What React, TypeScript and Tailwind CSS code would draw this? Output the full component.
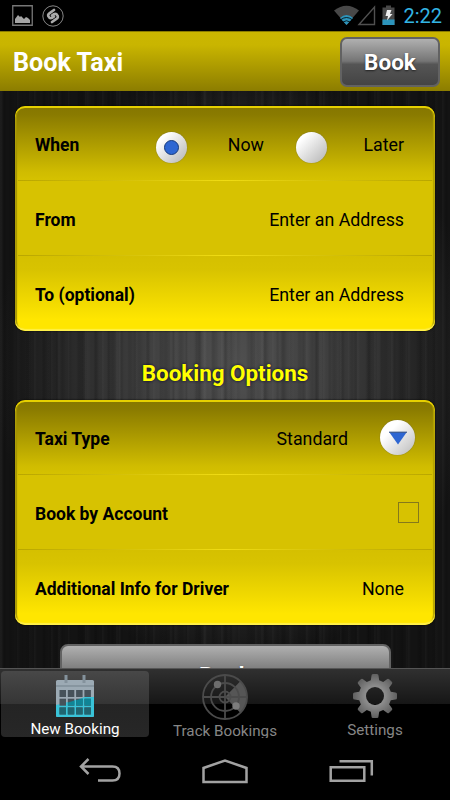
import React, { useState } from 'react';

const ROW_BG = [
   'bg-[linear-gradient(180deg,#857600_0%,#8a7b00_12%,#d0bc00_88%,#d6c200_100%)]',
   'bg-[#d7c201]',
   'bg-[linear-gradient(180deg,#d5c000_0%,#d8c300_18%,#ffe600_85%,#ffe600_100%)]',
];

const Row = ({ index, label, children }: { index: number; label: string; children: React.ReactNode }) => (
   <div className={`relative flex h-[75px] items-center justify-between pt-0.5 pl-5 pr-[31px] text-[17.8px] text-black ${ROW_BG[index]}`}>
      <span className="whitespace-nowrap pt-px text-[17.5px] font-bold">{label}</span>
      {children}
      {index < 2 && <span className="absolute inset-x-[3px] bottom-0 h-px bg-[linear-gradient(90deg,#b9a600,#f0dc14_50%,#b9a600)]" />}
   </div>
);

const Card = ({ children }: { children: React.ReactNode }) => (
   <div className="relative mx-[15px] h-[225px] overflow-hidden rounded-[10px] shadow-[0_0_2px_#000]">
      {children}
      <div className="pointer-events-none absolute inset-0 rounded-[10px] shadow-[inset_0_2px_0_#e6d000,inset_0_-2px_1px_#fff04a,inset_2px_0_1px_#a49300,inset_-2px_0_1px_#b3a100]" />
   </div>
);

const Radio = ({ checked, onClick }: { checked: boolean; onClick: () => void }) => (
   <button onClick={onClick} className="flex h-[31px] w-[31px] items-center justify-center rounded-full bg-[linear-gradient(135deg,#fff_20%,#bdbdbd_90%)] shadow-[0_0_1px_#555]">
      {checked && <span className="h-[15px] w-[15px] rounded-full border border-[#173a7c] bg-[#2e66d2]" />}
   </button>
);

const CalendarIcon = () => (
   <svg className="shrink-0" width="40" height="44" viewBox="0 0 40 44">
      <rect x="1" y="6" width="38" height="37" rx="1.5" fill="#9caab4" />
      <path d="M1 31L17 27L30 23H39V41.500Q39 43 37.500 43H2.500Q1 43 1 41.500Z" fill="#39c3d8" />
      <path d="M1 12H39" stroke="#72818b" />
      <path d="M11 1V9M29 1V9" stroke="#84929c" strokeWidth="3" />
      {[0, 1, 2].map(r => [0, 1, 2, 3].map(c => (
         <rect key={`${r}${c}`} x={4.5 + c * 8.3} y={16 + r * 8.7} width="6.500" height="7" fill="#46525a" />
      )))}
      <path d="M13 28.500L19.500 26.500V31.400H13ZM21.200 26L27.700 24.500V31.400H21.200ZM29.500 24.700H36V31.400H29.500Z" fill="#0f8596" />
      <path d="M4.500 33.500H11V40.500H4.500ZM12.800 33.500H19.300V40.500H12.800ZM21.100 33.500H27.600V40.500H21.100ZM29.400 33.500H35.900V40.500H29.400Z" fill="#1f6571" />
   </svg>
);

const RadarIcon = () => (
   <svg className="shrink-0" width="46" height="46" viewBox="0 0 46 46" fill="none" stroke="#4b4b4b" strokeWidth="1.800">
      <path d="M23 23L38.500 7A22 22 0 0 1 38.500 39Z" fill="#565656" stroke="none" />
      <circle cx="23" cy="23" r="22" />
      <circle cx="23" cy="23" r="14" />
      <circle cx="23" cy="23" r="5.500" />
      <path d="M23 1V45M1 23H45" />
      <circle cx="15.500" cy="10.500" r="3.700" fill="#6d6d6d" stroke="none" />
      <circle cx="34" cy="32" r="3.700" fill="#7c7c7c" stroke="none" />
   </svg>
);

const GearIcon = () => (
   <svg className="shrink-0" width="44" height="44" viewBox="0 0 44 44">
      <defs>
         <radialGradient id="gear">
            <stop offset="0.450" stopColor="#8c8c8c" />
            <stop offset="1" stopColor="#606060" />
         </radialGradient>
         <mask id="hole">
            <rect width="44" height="44" fill="#fff" />
            <circle cx="22" cy="22" r="9" fill="#000" />
         </mask>
      </defs>
      <g mask="url(#hole)" fill="url(#gear)">
         <path d="M18.500 1.500Q18.500 0 20 0H24Q25.500 0 25.500 1.500L26.200 6.200L30.200 7.900L34.300 5Q35.200 4.200 36.200 5.200L38.800 7.800Q39.800 8.800 39 9.700L36.100 13.800L37.800 17.800L42.500 18.500Q44 18.500 44 20V24Q44 25.500 42.500 25.500L37.800 26.200L36.100 30.200L39 34.300Q39.800 35.200 38.800 36.200L36.200 38.800Q35.200 39.800 34.300 39L30.200 36.100L26.200 37.800L25.500 42.500Q25.500 44 24 44H20Q18.500 44 18.500 42.500L17.800 37.800L13.800 36.100L9.700 39Q8.800 39.800 7.800 38.800L5.200 36.200Q4.200 35.200 5 34.300L7.900 30.200L6.200 26.200L1.500 25.500Q0 25.500 0 24V20Q0 18.500 1.500 18.500L6.200 17.800L7.900 13.800L5 9.700Q4.200 8.800 5.200 7.800L7.800 5.200Q8.800 4.200 9.700 5L13.800 7.900L17.800 6.200Z" />
      </g>
   </svg>
);

const StatusBar = () => (
   <div className="flex h-[31px] items-center bg-black pl-3 pr-2">
      <svg width="21" height="21" viewBox="0 0 21 21">
         <path d="M.75.75H20.250V20.250H.75Z" fill="none" stroke="#777" strokeWidth="1.300" />
         <path d="M3 18V14L6 10L8 12L9 11L12 14L14 12L16 13L18 15V18Z" fill="#a5a5a5" />
      </svg>
      <svg className="ml-[9px]" width="22" height="22" viewBox="0 0 22 22" fill="none">
         <circle cx="11" cy="11" r="10.200" stroke="#858585" />
         <path d="M12 5L8 7.800Q4.700 10 7.200 12.400Q9 14 12 11.500" stroke="#aaa" strokeWidth="2.700" strokeLinecap="round" />
         <path d="M10 17L14 14.200Q17.300 12 14.800 9.600Q13 8 10 10.500" stroke="#aaa" strokeWidth="2.700" strokeLinecap="round" />
      </svg>
      <svg className="ml-auto" width="62" height="21" viewBox="0 0 62 21">
         <path d="M0 5.500Q12.500-4 25 5.500L12.500 20Z" fill="#484848" />
         <path d="M6 13Q12.500 7 19 13L12.500 20Z" fill="#2c94bb" />
         <path d="M7 14.500Q12.500 10.500 18 14.500M9 17Q12.500 14.500 16 17" fill="none" stroke="#000" strokeWidth=".8" />
         <path d="M25 19.500L40.500 2V19.500Z" fill="none" stroke="#505050" strokeWidth="1.400" />
         <path d="M48.500 2.500H52V.5H57V2.500H60.500V20H48.500Z" fill="#484848" />
         <path d="M48.500 14.500H60.500V20H48.500Z" fill="#2c94bb" />
         <path d="M53 5L57.500 5L56 9H58.500L53 15.500L54 11H51.500Z" fill="#eee" />
      </svg>
      <span className="ml-[7px] pt-px text-[20px] leading-none text-[#33b5e5]">2:22</span>
   </div>
);

const BUTTON = 'border-2 border-[#626262] bg-[linear-gradient(180deg,#b0b0b0_0%,#757575_48%,#555_55%,#444_100%)] text-white font-bold text-center [text-shadow:0_1px_2px_#222]';

const App = () => {
   const [when, setWhen] = useState('now');
   const [account, setAccount] = useState(false);

   return (
      <div className="flex h-[800px] w-[450px] flex-col overflow-hidden bg-black font-[Roboto,sans-serif]">
         <StatusBar />
         <header className="flex h-[60px] shrink-0 items-center justify-between border-t border-[#8a7b00] bg-[linear-gradient(180deg,#cbb600_0%,#c9b500_22%,#8c7d00_100%)] pl-[13px] pr-2.5">
            <h1 className="pt-0.5 text-[25.2px] font-bold text-white">Book Taxi</h1>
            <button className={`h-[50px] w-[100px] rounded-[7px] pt-[3px] text-[22.5px] ${BUTTON}`}>Book</button>
         </header>

         <main className="h-[577px] shrink-0 overflow-hidden bg-[repeating-linear-gradient(90deg,#0000_0_3px,#0000001a_4px_5px,#0000_7px_13px),repeating-linear-gradient(90deg,#ffffff06_0_1px,#0000_3px_8px,#00000018_10px_12px,#0000_15px_17px),repeating-linear-gradient(90deg,#ffffff05_0_2px,#0000_4px_19px,#00000018_22px,#0000_29px),radial-gradient(ellipse_240px_300px_at_235px_275px,#505050_0%,#414141_35%,#222_80%,#131313_100%)] pt-[15px]">
            <Card>
               <Row index={0} label="When">
                  <div className="flex items-center">
                     <div className="pt-1.5"><Radio checked={when === 'now'} onClick={() => setWhen('now')} /></div>
                     <span className="w-[77px] pt-0.5 text-right">Now</span>
                     <div className="ml-8 pt-1.5"><Radio checked={when === 'later'} onClick={() => setWhen('later')} /></div>
                     <span className="w-[77px] pt-0.5 text-right">Later</span>
                  </div>
               </Row>
               <Row index={1} label="From"><span className="pt-0.5">Enter an Address</span></Row>
               <Row index={2} label="To (optional)"><span className="pt-0.5">Enter an Address</span></Row>
            </Card>

            <h2 className="flex h-[69px] items-center justify-center pt-[17px] text-[22.4px] font-bold text-[#ffff00] [text-shadow:0_0_3px_#000033]">Booking Options</h2>

            <Card>
               <Row index={0} label="Taxi Type">
                  <div className="-mr-[11px] flex items-center gap-8">
                     <span className="pt-0.5">Standard</span>
                     <span className="mb-0.5 flex h-[35px] w-[35px] items-center justify-center rounded-full bg-[linear-gradient(135deg,#fff_30%,#c4c4c4_90%)] shadow-[0_0_1px_#555]">
                        <svg className="mt-0.5" width="20" height="15" viewBox="0 0 20 15"><path d="M1.500 1.500H18.500L10 13.500Z" fill="#2e66d2" /><path d="M1 1.200H19" stroke="#173a7c" /></svg>
                     </span>
                  </div>
               </Row>
               <Row index={1} label="Book by Account">
                  <button onClick={() => setAccount(!account)} className="-mr-[15px] mb-0.5 h-[21px] w-[21px] border border-[#85791b] text-sm leading-none">{account && '✓'}</button>
               </Row>
               <Row index={2} label="Additional Info for Driver"><span className="pt-0.5">None</span></Row>
            </Card>

            <div className={`mx-auto mt-[19px] h-[60px] w-[331px] rounded-[8px] pt-[13px] text-[22.5px] ${BUTTON}`}>Book</div>
         </main>

         <nav className="grid h-[70px] shrink-0 grid-cols-3 border-t border-[#555] bg-[linear-gradient(180deg,#303030_0px,#161616_35px,#000_35px)] text-[15.2px] text-[#868686]">
            <div className="mx-px mt-0.5 flex h-[66px] flex-col items-center rounded-[4px] bg-[linear-gradient(180deg,#484848,#353535_50%,#242424_50%,#272727)] pt-[3px] leading-6 text-white">
               <CalendarIcon />
               <span className="-mt-px">New Booking</span>
            </div>
            <div className="flex flex-col items-center whitespace-nowrap pt-[5px] leading-[22px]">
               <RadarIcon />
               Track Bookings
            </div>
            <div className="flex flex-col items-center pt-[5px] leading-6">
               <GearIcon />
               Settings
            </div>
         </nav>

         <div className="grid h-[62px] grid-cols-[100px_1fr_100px] items-center bg-black px-[49px] pt-1">
            <svg width="100" height="30" viewBox="0 0 100 30" fill="none" stroke="#a2a2a2" strokeWidth="2.500">
               <path d="M49 24.500H63.500Q70.500 24.500 70.500 17.500T63.500 10.500H32M39.500 3L32 10.500L39.500 18" />
            </svg>
            <svg className="mx-auto" width="46" height="28" viewBox="0 0 46 28" fill="none" stroke="#a2a2a2" strokeWidth="2.500">
               <path d="M1.500 25H44.500V11L23 3.500L1.500 11Z" />
            </svg>
            <svg width="100" height="30" viewBox="0 0 100 30" fill="none" stroke="#a2a2a2" strokeWidth="2.500">
               <path d="M29.700 11.200H63.300V24.800H29.700ZM38.500 5.200H70.800V19.500" />
            </svg>
         </div>
      </div>
   );
};

export default App;
